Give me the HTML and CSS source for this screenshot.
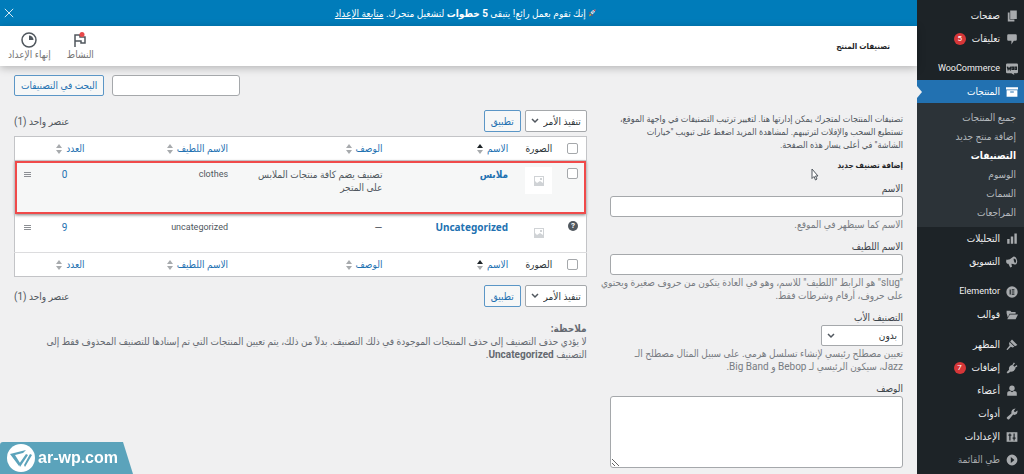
FILE: index.html
```html
<!DOCTYPE html>
<html lang="ar" dir="rtl">
<head>
<meta charset="utf-8">
<title>تصنيفات المنتج</title>
<link rel="stylesheet" href="styles.css">
</head>
<body>
<div class="shell">
  <nav class="sidebar" aria-label="القائمة الرئيسية">
    <a class="item" href="#"><svg class="icon" viewBox="0 0 20 20"><path d="M7 1h11v14H7zM3 4h3v12h8v3H3z"/></svg><span>صفحات</span></a>
    <a class="item" href="#"><svg class="icon" viewBox="0 0 20 20"><path d="M4 2h12q2 0 2 2v7q0 2-2 2h-3l-4 6v-6H4q-2 0-2-2V4q0-2 2-2z"/></svg><span>تعليقات</span><span class="count">5</span></a>
    <a class="item group" href="#"><svg class="icon" viewBox="0 0 20 20"><path fill-rule="evenodd" d="M2 1h16q2 0 2 2v12q0 2-2 2h-5l1 3-5-3H2q-2 0-2-2V3q0-2 2-2z"/><path class="cut" d="M2 6l1.500 5L5 8l2 3 1-5M10 7h2.500v3.500H10zM15 7h2.500v3.500H15z"/></svg><span class="latin">WooCommerce</span></a>
    <a class="item current" href="#" aria-current="page"><svg class="icon" viewBox="0 0 20 20"><path fill-rule="evenodd" d="M0 2h20v4H0zM1 7h18v11H1zM7 9v2h6V9z"/></svg><span>المنتجات</span></a>
    <div class="submenu">
      <a href="#">جميع المنتجات</a>
      <a href="#">إضافة منتج جديد</a>
      <a class="active" href="#">التصنيفات</a>
      <a href="#">الوسوم</a>
      <a href="#">السمات</a>
      <a href="#">المراجعات</a>
    </div>
    <a class="item" href="#"><svg class="icon" viewBox="0 0 20 20"><path d="M14 1h4v17h-4zM8 6h4v12H8zM2 10h4v8H2z"/></svg><span>التحليلات</span></a>
    <a class="item" href="#"><svg class="icon" viewBox="0 0 20 20"><path fill-rule="evenodd" d="M1 6q4 1 10-4 2-2 5 0 4 5 2 10-1 3-4 2-2-1-5-1l1 5-3 1-3-6H2Q-1 10 1 6zM13 4q-1 4 2 8 2-1 2-4-1-4-4-4z"/></svg><span>التسويق</span></a>
    <a class="item group" href="#"><svg class="icon" viewBox="0 0 20 20"><circle cx="10" cy="10" r="9.500"/><path class="cut" d="M7 6v8M9.500 6.500H14M9.500 10H14M9.500 13.500H14"/></svg><span class="latin">Elementor</span></a>
    <a class="item" href="#"><svg class="icon" viewBox="0 0 20 20"><path d="M1 3h6l2 2h7v3H6l-3 6-2-7zM6.500 9H20l-4 8H2z"/></svg><span>قوالب</span></a>
    <a class="item group" href="#"><svg class="icon" viewBox="0 0 20 20"><path d="M10 1l9 9-4 2-8-8zM6 5l8 8-3 1-3-1-5 5q-2 1-2-1l5-6-1-3z"/></svg><span>المظهر</span></a>
    <a class="item" href="#"><svg class="icon" viewBox="0 0 20 20"><path d="M13 1l2 1-3 4 2 2 4-3 1 2-4 3 1 1q-3 6-8 5l-5 3-2-2 4-4q-1-5 4-8l1 1z"/></svg><span>إضافات</span><span class="count">7</span></a>
    <a class="item" href="#"><svg class="icon" viewBox="0 0 20 20"><circle cx="10" cy="5.500" r="4.500"/><path d="M2 18v-4q0-4 5-4l3 2 3-2q5 0 5 4v4z"/></svg><span>أعضاء</span></a>
    <a class="item" href="#"><svg class="icon" viewBox="0 0 20 20"><path d="M16 1l-3 4 2 2 4-3q1 5-3 7-2 1-4 0l-7 8q-2 1-3-1-2-1 0-3l7-6q-1-7 7-8z"/></svg><span>أدوات</span></a>
    <a class="item" href="#"><svg class="icon" viewBox="0 0 20 20"><path d="M1 2h18v16H1z"/><path class="cut" d="M6.500 4v12M13.500 4v12M4 7h5M11 12h5"/></svg><span>الإعدادات</span></a>
    <a class="item collapse" href="#"><svg class="icon" viewBox="0 0 20 20"><path fill-rule="evenodd" d="M10 1a9 9 0 1 0 0 18 9 9 0 1 0 0-18zM8 5l6 5-6 5z"/></svg><span>طي القائمة</span></a>
  </nav>

  <div class="page">
    <div class="banner">
      <p><svg class="rocket" viewBox="0 0 16 16"><path fill="#d5dde3" d="M15 1Q9 1 5 7l4 4q6-4 6-10z"/><path fill="#c42b45" d="M15 1l-4 1 3 3zM5 6L1 8l3 1zM10 11l-2 4-1-4z"/><path fill="#f6a821" d="M4 9l3 3-5 3z"/><circle cx="10" cy="6" r="1.500" fill="#3a84b5"/></svg> إنك تقوم بعمل رائع! يتبقى <strong>5 خطوات</strong> لتشغيل متجرك. <a href="#">متابعة الإعداد</a></p>
      <button class="close" type="button" aria-label="إغلاق"><svg viewBox="0 0 12 12"><path d="M1 1l10 10M11 1L1 11"/></svg></button>
    </div>
    <header class="topbar">
      <h1>تصنيفات المنتج</h1>
      <div class="tabs">
        <button type="button"><svg viewBox="0 0 16 16"><path d="M3 15V3h5v2h5v6H9V9H3"/><circle class="dot" cx="10" cy="2.500" r="2.500"/></svg>النشاط</button>
        <button type="button"><svg viewBox="0 0 16 16"><circle cx="8" cy="8" r="7"/><path class="solid" d="M8 3.500V8h4.500A4.500 4.500 0 0 0 8 3.500z"/></svg>إنهاء الإعداد</button>
      </div>
    </header>

    <main class="content">
      <form class="search">
        <input class="field" type="search" aria-label="البحث في التصنيفات">
        <button class="button" type="button">البحث في التصنيفات</button>
      </form>

      <div class="columns">
        <section class="editor">
          <p class="intro">تصنيفات المنتجات لمتجرك يمكن إدارتها هنا. لتغيير ترتيب التصنيفات في واجهة الموقع،<br>تستطيع السحب والإفلات لترتيبهم. لمشاهدة المزيد اضغط على تبويب "خيارات<br>الشاشة" في أعلى يسار هذه الصفحة.</p>
          <h2>إضافة تصنيف جديد<svg class="pointer" viewBox="0 0 8 13"><path d="M1 1v9.500l2-2 1.500 3.500 1.500-1-1.500-3H7z"/></svg></h2>
          <form>
            <div class="form-row">
              <label for="name">الاسم</label>
              <input class="field" id="name" type="text">
              <p>الاسم كما سيظهر في الموقع.</p>
            </div>
            <div class="form-row">
              <label for="slug">الاسم اللطيف</label>
              <input class="field" id="slug" type="text">
              <p>"slug" هو الرابط "اللطيف" للاسم، وهو في العادة يتكون من حروف صغيرة ويحتوي على حروف، أرقام وشرطات فقط.</p>
            </div>
            <div class="form-row">
              <label for="parent">التصنيف الأب</label>
              <select class="select parent" id="parent"><option>بدون</option></select>
              <p>تعيين مصطلح رئيسي لإنشاء تسلسل هرمي. على سبيل المثال مصطلح الـ<br>Jazz، سيكون الرئيسي لـ Bebop و Big Band.</p>
            </div>
            <div class="form-row">
              <label for="description">الوصف</label>
              <textarea class="field" id="description"></textarea>
            </div>
          </form>
        </section>

        <section class="listing">
          <div class="actions">
            <select class="select" aria-label="تنفيذ الأمر"><option>تنفيذ الأمر</option></select>
            <button class="button" type="button">تطبيق</button>
            <span class="total">عنصر واحد (1)</span>
          </div>
          <table>
            <colgroup><col class="c-check"><col class="c-thumb"><col class="c-name"><col class="c-desc"><col class="c-slug"><col class="c-posts"><col class="c-handle"></colgroup>
            <thead>
              <tr>
                <td class="check"><input type="checkbox" aria-label="تحديد الكل"></td>
                <th class="thumb" scope="col">الصورة</th>
                <th scope="col"><a class="sort asc" href="#">الاسم<svg viewBox="0 0 6 10"><path d="M0 4l3-4 3 4z"/><path d="M0 6l3 4 3-4z"/></svg></a></th>
                <th scope="col"><a class="sort" href="#">الوصف<svg viewBox="0 0 6 10"><path d="M0 4l3-4 3 4z"/><path d="M0 6l3 4 3-4z"/></svg></a></th>
                <th scope="col"><a class="sort" href="#">الاسم اللطيف<svg viewBox="0 0 6 10"><path d="M0 4l3-4 3 4z"/><path d="M0 6l3 4 3-4z"/></svg></a></th>
                <th scope="col"><a class="sort" href="#">العدد<svg viewBox="0 0 6 10"><path d="M0 4l3-4 3 4z"/><path d="M0 6l3 4 3-4z"/></svg></a></th>
                <td></td>
              </tr>
            </thead>
            <tbody>
              <tr class="marked">
                <td class="check"><input type="checkbox" aria-label="تحديد ملابس"></td>
                <td class="thumb"><span class="image"><svg viewBox="0 0 10 10"><path fill-rule="evenodd" d="M0 0h10v10H0zM1 1v4l2 2 3-2 3 2V1zM6 2h2v2H6z"/></svg></span></td>
                <td><a class="title" href="#">ملابس</a></td>
                <td>تصنيف يضم كافة منتجات الملابس<br>على المتجر</td>
                <td class="slug">clothes</td>
                <td class="posts"><a href="#">0</a></td>
                <td class="handle"><svg viewBox="0 0 7 5"><path d="M0 .5h7M0 2.500h7M0 4.500h7"/></svg></td>
              </tr>
              <tr>
                <td class="check"><span class="help">?</span></td>
                <td class="thumb"><span class="image"><svg viewBox="0 0 10 10"><path fill-rule="evenodd" d="M0 0h10v10H0zM1 1v4l2 2 3-2 3 2V1zM6 2h2v2H6z"/></svg></span></td>
                <td><a class="title" href="#">Uncategorized</a></td>
                <td>—</td>
                <td class="slug">uncategorized</td>
                <td class="posts"><a href="#">9</a></td>
                <td class="handle"><svg viewBox="0 0 7 5"><path d="M0 .5h7M0 2.500h7M0 4.500h7"/></svg></td>
              </tr>
            </tbody>
            <tfoot>
              <tr>
                <td class="check"><input type="checkbox" aria-label="تحديد الكل"></td>
                <th class="thumb" scope="col">الصورة</th>
                <th scope="col"><a class="sort asc" href="#">الاسم<svg viewBox="0 0 6 10"><path d="M0 4l3-4 3 4z"/><path d="M0 6l3 4 3-4z"/></svg></a></th>
                <th scope="col"><a class="sort" href="#">الوصف<svg viewBox="0 0 6 10"><path d="M0 4l3-4 3 4z"/><path d="M0 6l3 4 3-4z"/></svg></a></th>
                <th scope="col"><a class="sort" href="#">الاسم اللطيف<svg viewBox="0 0 6 10"><path d="M0 4l3-4 3 4z"/><path d="M0 6l3 4 3-4z"/></svg></a></th>
                <th scope="col"><a class="sort" href="#">العدد<svg viewBox="0 0 6 10"><path d="M0 4l3-4 3 4z"/><path d="M0 6l3 4 3-4z"/></svg></a></th>
                <td></td>
              </tr>
            </tfoot>
          </table>
          <div class="actions bottom">
            <select class="select" aria-label="تنفيذ الأمر"><option>تنفيذ الأمر</option></select>
            <button class="button" type="button">تطبيق</button>
            <span class="total">عنصر واحد (1)</span>
          </div>
          <div class="note">
            <p><strong>ملاحظة:</strong></p>
            <p>لا يؤدي حذف التصنيف إلى حذف المنتجات الموجودة في ذلك التصنيف. بدلاً من ذلك، يتم تعيين المنتجات التي تم إسنادها للتصنيف المحذوف فقط إلى التصنيف <strong>Uncategorized</strong>.</p>
          </div>
        </section>
      </div>
    </main>
  </div>
</div>
<div class="watermark" dir="ltr">
  <svg viewBox="0 0 28 28"><circle cx="14" cy="14" r="14" fill="#fff"/><path d="M3 10l16-4-3 3-8 2 5 8-1 3zM12 20l7-10 2 1-8 12zM17 21l6-11 2 1-7 12z"/></svg>
  <span>ar-wp.com</span>
</div>
</body>
</html>
```
FILE: styles.css
```css
* { box-sizing: border-box; }
body {
  margin: 0;
  background: #f0f0f1;
  color: #50575e;
  font: 10px/13px Roboto, "DejaVu Sans Condensed", "DejaVu Sans", sans-serif;
}
a { color: #2271b1; text-decoration: none; }
h1, h2, p { margin: 0; }
button, input, select, textarea { font: inherit; margin: 0; }
.shell { display: flex; min-height: 100vh; }

.sidebar {
  flex: 0 0 107px;
  padding-top: 4px;
  background: #1d2327;
}
.item {
  position: relative;
  display: flex;
  align-items: center;
  gap: 6px;
  height: 23px;
  padding-right: 6px;
  color: #f0f0f1;
  white-space: nowrap;
}
.group { margin-top: 7px; }
.icon { flex: none; width: 12px; height: 12px; fill: #a7aaad; }
.cut { fill: none; stroke: #1d2327; stroke-width: 2; }
.latin { font-size: 9px; }
.count {
  width: 12px;
  height: 12px;
  border-radius: 50%;
  background: #d63638;
  color: #fff;
  font-size: 8px;
  line-height: 12px;
  text-align: center;
}
.current { background: #2271b1; color: #fff; }
.current .icon { fill: #fff; }
.current::after {
  content: "";
  position: absolute;
  left: 0;
  top: 6px;
  border: solid transparent;
  border-width: 6px 0 6px 5px;
  border-left-color: #f0f0f1;
}
.collapse { color: #a7aaad; }
.submenu { padding: 5px 8px; background: #2c3338; }
.submenu a {
  display: block;
  color: #b4b9be;
  line-height: 19px;
  white-space: nowrap;
}
.submenu .active { color: #fff; font-weight: 700; }

.page { flex: 1; min-width: 0; }
.banner {
  display: flex;
  align-items: center;
  height: 26px;
  padding: 0 0 0 4px;
  background: #007cba;
  color: #fff;
}
.banner p { flex: 1; text-align: center; }
.banner a { color: #fff; text-decoration: underline; }
.rocket { width: 8px; height: 8px; }
.close { display: flex; padding: 0; border: 0; background: none; }
.close svg { width: 10px; height: 10px; fill: none; stroke: #fff; }
.topbar {
  display: flex;
  align-items: center;
  justify-content: space-between;
  height: 40px;
  padding: 0 27px 0 8px;
  background: #fff;
  box-shadow: 0 2px 8px rgba(0, 0, 0, .25);
}
h1, h2 { color: #1d2327; font-size: 8px; line-height: 13px; }
.tabs { display: flex; gap: 16px; }
.tabs button {
  display: flex;
  flex-direction: column;
  align-items: center;
  padding: 0;
  border: 0;
  background: none;
  color: #757575;
}
.tabs svg { width: 16px; height: 16px; fill: none; stroke: #50575e; stroke-width: 1.5; }
.tabs .solid { fill: #50575e; stroke: none; }
.tabs .dot { fill: #e8484a; stroke: none; }

.content { padding: 9px 14px 5px; }
.search { display: flex; justify-content: flex-end; gap: 8px; }
.search .field { width: 128px; }
.field {
  display: block;
  width: 95%;
  height: 21px;
  border: 1px solid #a5a8ab;
  border-radius: 3px;
  background: #fff;
}
.button {
  height: 21px;
  padding: 0 6px;
  border: 1px solid #5b96c6;
  border-radius: 2px;
  background: #f6f7f7;
  color: #2271b1;
  white-space: nowrap;
}
.select {
  appearance: none;
  height: 22px;
  padding: 0 5px 0 17px;
  border: 1px solid #a5a8ab;
  border-radius: 2px;
  background: #fff url("data:image/svg+xml,%3Csvg xmlns='http://www.w3.org/2000/svg' viewBox='0 0 8 6'%3E%3Cpath d='M1 1l3 3 3-3' fill='none' stroke='%2350575e' stroke-width='1.500'/%3E%3C/svg%3E") no-repeat left 5px center / 8px 6px;
  color: #2c3338;
}
.columns { display: grid; grid-template-columns: 35fr 65fr; gap: 8px; padding-top: 14px; }
.editor, .listing { min-width: 0; }
.intro { padding-top: 3px; font-size: 9px; }
h2 { position: relative; margin: 7px 0 10px; }
.pointer {
  position: absolute;
  right: 84px;
  top: 9px;
  width: 8px;
  height: 13px;
  fill: #fff;
  stroke: #50575e;
}
.form-row { margin-bottom: 9px; }
.form-row label { display: block; margin-bottom: 1px; color: #3c434a; }
.form-row p { padding-top: 1px; color: #787c82; }
.form-row .parent { display: block; width: 82px; height: 21px; }
.form-row textarea { height: 72px; resize: vertical; }

.actions { display: flex; align-items: center; gap: 4px; }
.actions .button { height: 22px; }
.bottom { margin-top: 8px; }
.total { margin-right: auto; }
table {
  width: 100%;
  margin-top: 4px;
  border: 1px solid #c3c4c7;
  border-collapse: collapse;
  table-layout: fixed;
  background: #fff;
}
.c-check { width: 26px; }
.c-thumb { width: 48px; }
.c-name { width: 22%; }
.c-desc { width: 27%; }
.c-posts { width: 48px; }
.c-handle { width: 26px; }
th, td {
  padding: 0 4px;
  font-weight: 400;
  text-align: right;
  vertical-align: middle;
}
thead tr, tfoot tr { height: 24px; }
thead tr { border-bottom: 1px solid #c3c4c7; }
tfoot tr { border-top: 1px solid #dcdcde; }
th { color: #2c3338; }
.sort { display: flex; align-items: center; gap: 4px; white-space: nowrap; }
.sort svg { width: 6px; height: 10px; fill: #a7aaad; }
.asc path:first-child { fill: #1d2327; }
tbody td { padding-top: 7px; vertical-align: top; }
tbody tr { height: 39px; }
tbody .marked {
  height: 53px;
  background: #f6f7f7;
  outline: 2px solid #f04a4a;
  outline-offset: -2px;
  box-shadow: 0 1px 3px rgba(0, 0, 0, .5);
}
td.check { text-align: center; }
td.check input {
  appearance: none;
  display: block;
  width: 11px;
  height: 11px;
  margin: 0 auto;
  border: 1px solid #a5a8ab;
  border-radius: 2px;
  background: #fff;
}
.help {
  display: block;
  width: 10px;
  height: 10px;
  margin: 0 auto;
  border-radius: 50%;
  background: #50575e;
  color: #fff;
  font-size: 8px;
  font-weight: 700;
  line-height: 10px;
}
th.thumb, td.thumb { padding-right: 8px; }
tbody td.thumb { padding-top: 6px; }
.image {
  display: flex;
  align-items: center;
  justify-content: center;
  width: 27px;
  height: 27px;
  background: #fff;
}
.image svg { width: 10px; height: 10px; fill: #d0d3d6; }
.title { font-family: "Noto Sans", "DejaVu Sans Condensed", "DejaVu Sans", sans-serif; font-weight: 700; }
.slug { font-size: 9px; }
td.posts { text-align: center; }
.handle svg { display: block; width: 7px; height: 5px; margin: 4px auto; stroke: #8c8f94; }
.note { margin-top: 15px; color: #646970; }

.watermark {
  position: fixed;
  left: 0;
  bottom: 0;
  display: flex;
  align-items: center;
  gap: 3px;
  height: 32px;
  padding: 0 15px 0 7px;
  border-top-left-radius: 3px;
  background: #5ba3bb;
  clip-path: polygon(0 0, calc(100% - 10px) 0, 100% 100%, 0 100%);
  color: #fff;
  font: 700 16px/32px "Liberation Sans", sans-serif;
}
.watermark svg { width: 28px; height: 28px; fill: #5ba3bb; }
```
